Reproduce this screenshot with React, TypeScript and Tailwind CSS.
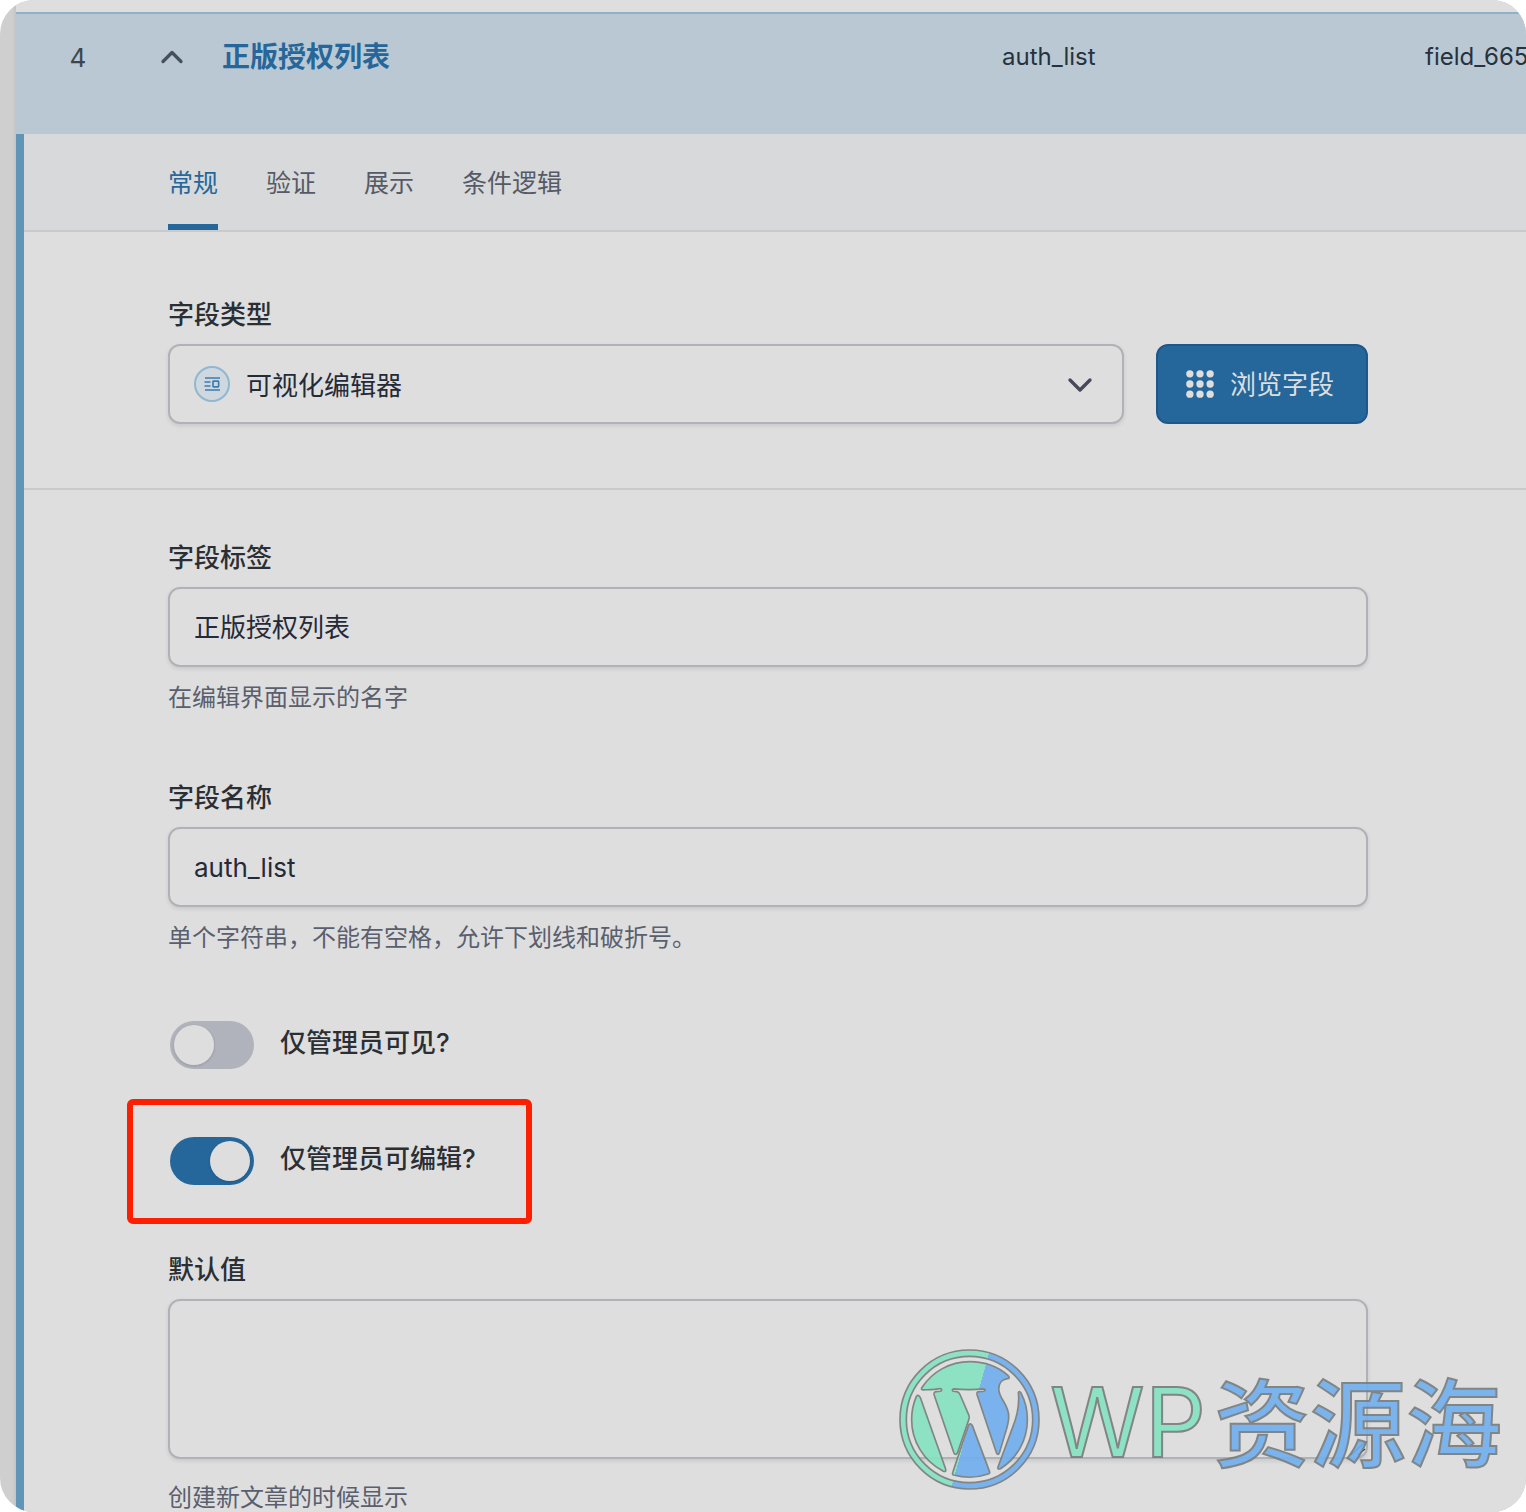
import { useState } from "react";
import type { ReactNode } from "react";
import { ChevronDown, ChevronUp } from "lucide-react";

const controlClass =
  "block w-full rounded-xl border-2 border-[#afb2b7] bg-[#dedede] px-6 text-[26px] text-[#252a38] shadow-[0_2px_4px_rgba(16,24,40,0.1)] outline-none";

function Field({
  id,
  label,
  help,
  children,
}: {
  id: string;
  label: string;
  help?: string;
  children: ReactNode;
}) {
  return (
    <div>
      <label
        htmlFor={id}
        className="mb-3 block text-[26px] leading-[34px] font-medium text-[#2b2f33]"
      >
        {label}
      </label>
      {children}
      {help && (
        <p className="mt-[17px] text-2xl leading-7 text-[#5a5f6e]">{help}</p>
      )}
    </div>
  );
}

function Toggle({
  id,
  label,
  initial,
  highlighted,
}: {
  id: string;
  label: string;
  initial: boolean;
  highlighted?: boolean;
}) {
  const [on, setOn] = useState(initial);
  return (
    <div className="relative flex w-fit items-start gap-[26px] pl-0.5">
      <input
        id={id}
        type="checkbox"
        role="switch"
        checked={on}
        onChange={() => setOn(!on)}
        className="relative h-12 w-21 shrink-0 appearance-none rounded-full bg-[#b0b3bb] before:absolute before:top-1 before:left-1 before:size-10 before:rounded-full before:bg-[#dedede] before:shadow-[0_1px_3px_rgba(0,0,0,0.15)] checked:bg-[#26679b] checked:before:left-10"
      />
      <label
        htmlFor={id}
        className="pt-[5px] text-[26px] leading-[34px] font-medium text-[#2b2f33]"
      >
        {label}
      </label>
      {highlighted && (
        <span className="pointer-events-none absolute -top-[38px] -right-14 -bottom-[39px] -left-[41px] rounded-md border-6 border-[#fd1f02]" />
      )}
    </div>
  );
}

function EditorIcon() {
  return (
    <svg viewBox="0 0 36 36" className="size-9" fill="none" aria-hidden="true">
      <circle cx="18" cy="18" r="17" fill="#cfd8de" stroke="#8fb8d0" strokeWidth="2" />
      <g stroke="#3c7cb0" strokeWidth="1.7">
        <path d="M11 12h15M11 24h15M10.5 16h6M10.5 20h6" />
        <rect x="19" y="15.2" width="5.6" height="5.6" rx="0.6" />
      </g>
    </svg>
  );
}

function DotsIcon() {
  const steps = [4, 14.5, 25];
  return (
    <svg viewBox="0 0 29 29" className="size-7" fill="#dedede" aria-hidden="true">
      {steps.map((y) => steps.map((x) => <circle key={`${x}-${y}`} cx={x} cy={y} r="3.8" />))}
    </svg>
  );
}

function WordPressMark() {
  return (
    <svg viewBox="28 40 424 424" className="size-[141px] shrink-0" aria-hidden="true">
      <defs>
        <linearGradient
          id="mark"
          gradientUnits="userSpaceOnUse"
          x1="-175"
          y1="133"
          x2="661"
          y2="369"
        >
          <stop offset="50%" stopColor="#84e3c0" />
          <stop offset="50%" stopColor="#70aeef" />
        </linearGradient>
      </defs>
      <g fill="url(#mark)" stroke="#777c7c" strokeWidth="5" strokeLinejoin="round">
        <path
          fillRule="evenodd"
          d="M31 252a209 209 0 1 0 418 0a209 209 0 1 0 -418 0zM50 252a190 190 0 1 1 380 0a190 190 0 1 1 -380 0z"
        />
        <path d="M80 183Q87 175 92 186L168 400Q171 412 160 407C102 376 66 318 66 252C66 228 71 204 80 183z" />
        <path d="M97 156C128 108 182 78 240 78C286 78 329 95 357 121Q363 129 354 129C338 131 328 143 328 160C328 190 358 205 358 243C358 265 350 285 344 305L330 352Q326 362 321 352L263 178Q260 168 269 168L283 167Q291 163 284 160C250 163 225 163 192 160Q185 163 191 167L202 168Q208 169 211 176L238 239Q241 245 238 252L204 352Q198 362 193 352L134 179Q131 169 140 168L153 167Q160 163 153 159C134 162 120 162 100 163Q93 162 97 156z" />
        <path d="M237 269Q242 261 248 269L300 408Q303 414 296 416C262 428 226 428 192 419Q187 417 190 410z" />
        <path d="M387 171Q391 165 395 173C408 198 414 225 414 252C414 315 382 369 333 400Q323 404 326 394L370 275Q392 220 387 171z" />
      </g>
    </svg>
  );
}

const tabs = ["常规", "验证", "展示", "条件逻辑"];

export default function App() {
  const [tab, setTab] = useState(tabs[0]);
  return (
    <main className="relative min-h-screen overflow-hidden rounded-[34px] bg-gradient-to-r from-[#cfcfcf] from-[12px] to-[#c4c4c4] to-[16px] pl-4 font-['Inter','Noto_Sans_CJK_SC',sans-serif]">
      <div className="bg-[#dedede]">
        <div className="h-3" />
        <header className="grid h-[122px] grid-cols-[124px_64px_minmax(0,1fr)_423px_101px] border-t-2 border-[#8fb0c7] bg-[#bac8d3] pt-[23px] text-2xl leading-10 whitespace-nowrap text-[#25323f]">
          <span className="text-center text-[26px] leading-[42px] text-[#3d464f]">4</span>
          <button type="button" aria-label="收起" className="flex h-10 items-center justify-center text-[#44505a]">
            <ChevronUp className="size-9" strokeWidth={2.2} />
          </button>
          <a href="#field" className="pl-[18px] text-[28px] font-bold text-[#26679b]">
            正版授权列表
          </a>
          <span>auth_list</span>
          <span>field_665</span>
        </header>

        <div className="border-l-8 border-[#6095b8]">
          <nav role="tablist" className="flex gap-12 border-b-2 border-[#c8cacb] bg-[#d7d9da] pl-36">
            {tabs.map((name) => (
              <button
                key={name}
                type="button"
                role="tab"
                aria-selected={tab === name}
                onClick={() => setTab(name)}
                className="h-24 border-b-6 border-transparent pt-2.5 text-[25px] text-[#565a66] aria-selected:border-[#26679b] aria-selected:text-[#26679b]"
              >
                {name}
              </button>
            ))}
          </nav>

          <section className="border-b-2 border-[#c8cacb] pt-[66px] pr-[158px] pb-16 pl-36">
            <Field id="type" label="字段类型">
              <div className="flex gap-8">
                <div className="relative flex-1">
                  <select id="type" className={`${controlClass} h-20 appearance-none pt-0.5 pl-[76px]!`}>
                    <option>可视化编辑器</option>
                  </select>
                  <span className="pointer-events-none absolute inset-y-0 left-[26px] flex items-center">
                    <EditorIcon />
                  </span>
                  <span className="pointer-events-none absolute inset-y-0 right-6 flex items-center pt-0.5 text-[#454958]">
                    <ChevronDown className="size-10" strokeWidth={2} />
                  </span>
                </div>
                <button
                  type="button"
                  className="flex h-20 w-[212px] items-center justify-center gap-4 rounded-xl border-2 border-[#20578a] bg-[#26679b] pr-1 text-[26px] text-[#dedede]"
                >
                  <DotsIcon />
                  浏览字段
                </button>
              </div>
            </Field>
          </section>

          <section className="flex flex-col gap-[69px] pt-[51px] pr-[158px] pl-36">
            <Field id="label" label="字段标签" help="在编辑界面显示的名字">
              <input id="label" type="text" defaultValue="正版授权列表" className={`${controlClass} h-20 pb-1`} />
            </Field>
            <Field id="name" label="字段名称" help="单个字符串，不能有空格，允许下划线和破折号。">
              <input id="name" type="text" defaultValue="auth_list" className={`${controlClass} h-20`} />
            </Field>
            <div className="flex flex-col gap-[68px]">
              <Toggle id="visible" label="仅管理员可见?" initial={false} />
              <Toggle id="editable" label="仅管理员可编辑?" initial highlighted />
              <Field id="default" label="默认值" help="创建新文章的时候显示">
                <div className="relative mb-[25px]">
                  <textarea id="default" className={`${controlClass} h-40 resize-none py-4`} />
                  <svg
                    viewBox="0 0 16 16"
                    className="pointer-events-none absolute right-0.5 bottom-0.5 size-4"
                    stroke="#3c4250"
                    strokeWidth="1.5"
                    aria-hidden="true"
                  >
                    <path d="M1 14L15 1M8 14L15 8" />
                  </svg>
                </div>
              </Field>
            </div>
          </section>
        </div>
      </div>

      <div className="pointer-events-none absolute right-6 bottom-[19px] flex items-center opacity-90">
        <WordPressMark />
        <span className="ml-2.5 pt-1.5 text-[96px] leading-[141px] whitespace-nowrap text-[#84e3c0] [-webkit-text-stroke:2px_#777c7c]">
          WP
        </span>
        <span className="ml-2 pb-1 font-['Noto_Sans_CJK_SC',sans-serif] text-[96px] leading-[136px] font-medium whitespace-nowrap text-[#70aeef] [-webkit-text-stroke:2px_#777c7c]">
          资源海
        </span>
      </div>
    </main>
  );
}
